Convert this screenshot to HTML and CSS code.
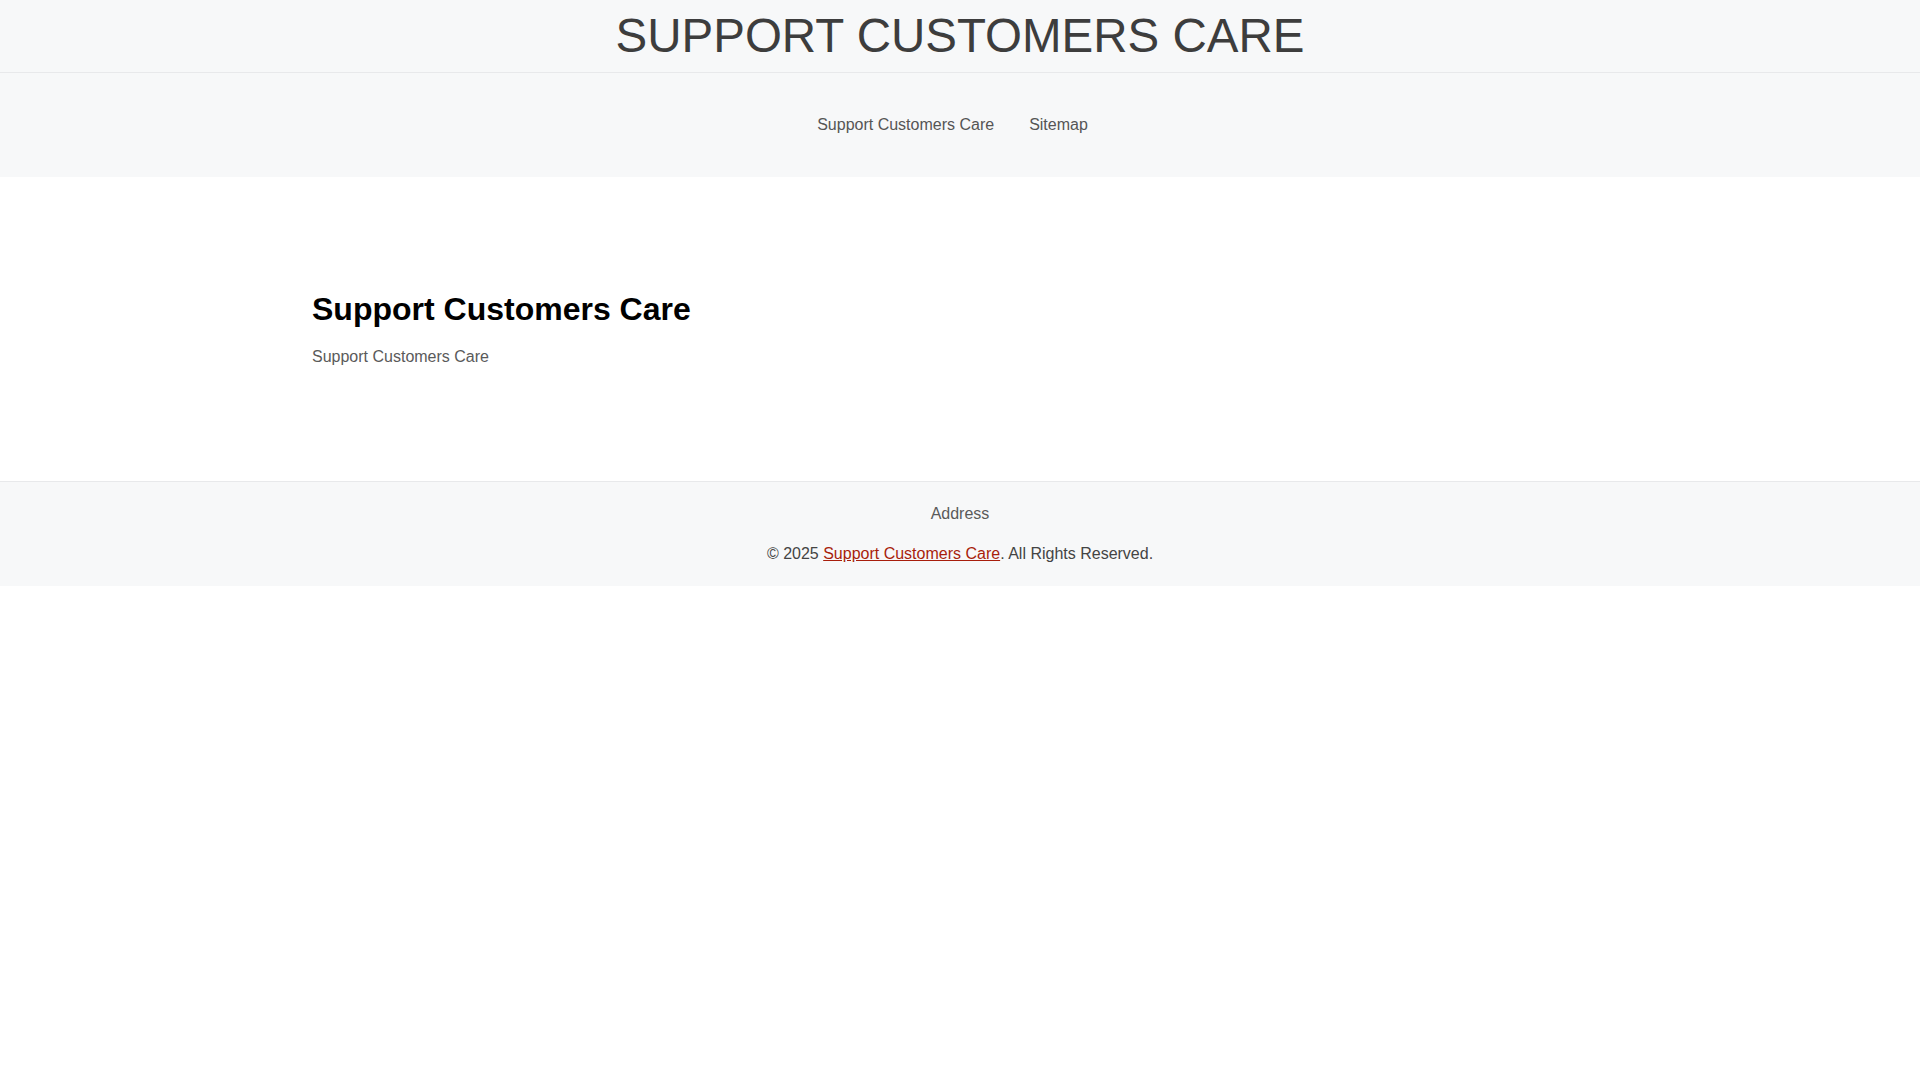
FILE: index.html
```html
<!DOCTYPE html>
<html lang="en">
<head>
  <meta charset="UTF-8">
  <meta name="viewport" content="width=device-width, initial-scale=1.0">
  <title>Support Customers Care</title>
  <link rel="stylesheet" href="styles.css">
</head>
<body>
  <header class="site-header">
    <div class="site-title">SUPPORT CUSTOMERS CARE</div>
  </header>

  <nav class="site-nav">
    <ul class="nav-list">
      <li><a href="#" class="nav-link">Support Customers Care</a></li>
      <li><a href="#" class="nav-link">Sitemap</a></li>
    </ul>
  </nav>

  <main class="site-main">
    <div class="container">
      <h1 class="page-title">Support Customers Care</h1>
      <p class="page-text">Support Customers Care</p>
    </div>
  </main>

  <footer class="site-footer">
    <p class="footer-address">Address</p>
    <p class="footer-copy">&copy; 2025 <a href="#" class="footer-link">Support Customers Care</a>. All Rights Reserved.</p>
  </footer>
</body>
</html>
```

FILE: styles.css
```css
* {
  margin: 0;
  padding: 0;
  box-sizing: border-box;
}

body {
  font-family: 'Liberation Sans', Arial, sans-serif;
  font-size: 16px;
  line-height: 24px;
  color: #333;
  background-color: #fff;
}

a {
  text-decoration: none;
}

/* Header */
.site-header {
  background-color: #f7f8f9;
  border-bottom: 1px solid #e8e9eb;
  padding: 8px 0;
  text-align: center;
}

.site-title {
  font-size: 47.5px;
  line-height: 56px;
  color: #3d3d3d;
  font-weight: 400;
}

/* Navigation */
.site-nav {
  background-color: #f7f8f9;
  padding: 40px 15px 40px 0;
}

.nav-list {
  list-style: none;
  display: flex;
  justify-content: center;
  gap: 35px;
}

.nav-link {
  color: #555;
}

.nav-link:hover {
  color: #111;
}

/* Main content */
.site-main {
  padding: 113px 0 112px;
}

.container {
  max-width: 1320px;
  margin: 0 auto;
  padding: 0 12px;
}

.page-title {
  font-size: 32px;
  line-height: 38px;
  font-weight: 700;
  color: #000;
  margin-bottom: 17px;
}

.page-text {
  color: #5a5a5a;
}

/* Footer */
.site-footer {
  background-color: #f7f8f9;
  border-top: 1px solid #e8e9eb;
  padding: 20px 0;
  text-align: center;
}

.footer-address {
  color: #5a5a5a;
  margin-bottom: 16px;
}

.footer-copy {
  color: #444;
}

.footer-link {
  color: #a81e0c;
  text-decoration: underline;
}
```
